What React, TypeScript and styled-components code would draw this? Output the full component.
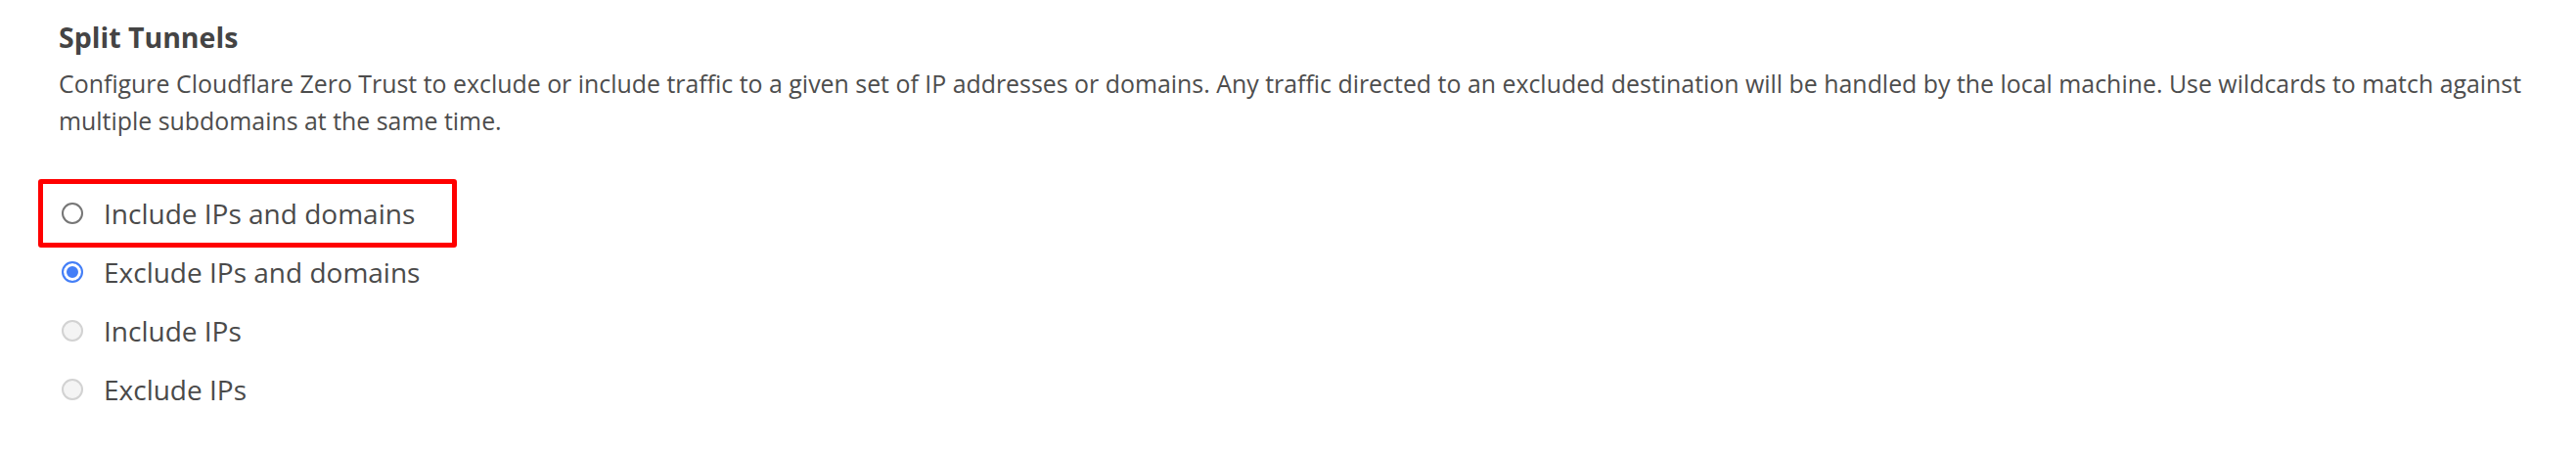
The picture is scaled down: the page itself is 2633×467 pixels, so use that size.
import styled, { createGlobalStyle } from "styled-components";

const GlobalStyle = createGlobalStyle`
  html, body {
    margin: 0;
    padding: 0;
    background: #ffffff;
  }
  body {
    font-family: "Open Sans", "Noto Sans", "Liberation Sans", sans-serif;
    color: #4a4a4a;
  }
`;

const Section = styled.section`
  padding: 22px 13px 0 60px;
  width: 2560px;
`;

const Title = styled.h2`
  margin: 0;
  font-size: 28.5px;
  line-height: 32px;
  font-weight: 700;
  color: #444444;
`;

const Description = styled.p`
  margin: 12px 0 0;
  font-size: 24.9px;
  line-height: 38px;
  color: #4d4d4d;
`;

const Options = styled.div`
  display: flex;
  flex-direction: column;
  margin-top: 46px;
`;

const Row = styled.label`
  position: relative;
  display: flex;
  align-items: center;
  gap: 21px;
  height: 60px;
  padding-left: 3px;
  font-size: 28px;
  color: #4a4a4a;
  cursor: default;
`;

type RadioState = "idle" | "checked" | "disabled";

const Radio = styled.span<{ $state: RadioState }>`
  flex: none;
  box-sizing: border-box;
  width: 22px;
  height: 22px;
  border-radius: 50%;
  border: 2px solid
    ${(p) =>
      p.$state === "checked" ? "#437ef7" : p.$state === "disabled" ? "#d2d2d2" : "#767676"};
  background: ${(p) => (p.$state === "disabled" ? "#f4f4f4" : "#ffffff")};
  box-shadow: ${(p) =>
    p.$state === "checked" ? "inset 0 0 0 3px #ffffff, inset 0 0 0 9px #437ef7" : "none"};
`;

const Highlight = styled.span`
  position: absolute;
  left: -21px;
  top: -5px;
  width: 428px;
  height: 70px;
  box-sizing: border-box;
  border: 5px solid #ff0000;
  border-radius: 3px;
  pointer-events: none;
`;

const options: { label: string; state: RadioState; marked?: boolean }[] = [
  { label: "Include IPs and domains", state: "idle", marked: true },
  { label: "Exclude IPs and domains", state: "checked" },
  { label: "Include IPs", state: "disabled" },
  { label: "Exclude IPs", state: "disabled" },
];

function App() {
  return (
    <>
      <GlobalStyle />
      <Section>
        <Title>Split Tunnels</Title>
        <Description>
          Configure Cloudflare Zero Trust to exclude or include traffic to a given set of IP addresses or
          domains. Any traffic directed to an excluded destination will be handled by the local machine. Use
          wildcards to match against multiple subdomains at the same time.
        </Description>
        <Options>
          {options.map((o) => (
            <Row key={o.label}>
              <Radio $state={o.state} />
              {o.label}
              {o.marked && <Highlight />}
            </Row>
          ))}
        </Options>
      </Section>
    </>
  );
}

export default App;
